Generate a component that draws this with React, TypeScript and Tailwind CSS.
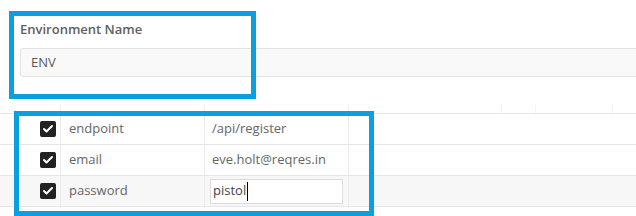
import { Check } from 'lucide-react';

const rows = [
  { key: 'endpoint', value: '/api/register', active: false },
  { key: 'email', value: 'eve.holt@reqres.in', active: false },
  { key: 'password', value: 'pistol', active: true },
];

const Checkbox = () => (
  <span className="flex h-4 w-4 items-center justify-center rounded-[2px] bg-[#222]">
    <Check className="h-3 w-3 text-white" strokeWidth={4} />
  </span>
);

export default function App() {
  return (
    <div className="relative h-[216px] w-[636px] overflow-hidden bg-white font-['Open_Sans',sans-serif] text-[13px]">
      <div className="px-5 pt-[19px]">
        <div className="font-semibold leading-[20px] text-[#606060]">Environment Name</div>
        <div className="-mr-8 mt-[9px] flex h-[29px] items-center rounded-[3px] border border-[#e3e3e3] bg-[#f9f9f9] px-[10px] text-[#5a5a5a]">
          ENV
        </div>
      </div>

      {/* faint header cells above the table */}
      <div className="mt-[28px] flex h-[8px]">
        <div className="w-[61px] border-r border-[#f0f0f0]" />
        <div className="w-[144px] border-r border-[#f0f0f0]" />
        <div className="w-[144px] border-r border-[#f0f0f0]" />
        <div className="w-[153px] border-r border-[#f4f4f4]" />
        <div className="w-[34px] border-r border-[#f4f4f4]" />
        <div className="w-[77px] border-r border-[#f4f4f4]" />
      </div>

      <div className="border-t border-[#e6e6e6]">
        {rows.map((row) => (
          <div
            key={row.key}
            className={`flex h-[31px] border-b border-[#e6e6e6] ${row.active ? 'bg-[#f7f7f7]' : ''}`}
          >
            <div className="flex w-[61px] items-center justify-end border-r border-[#ececec] pr-[4px]">
              <Checkbox />
            </div>
            <div className="flex w-[144px] items-center border-r border-[#ececec] pl-[8px] text-[#666]">
              {row.key}
            </div>
            <div className="flex w-[144px] items-center border-r border-[#ececec] px-[5px] text-[#666]">
              {row.active ? (
                <div className="flex h-[25px] w-full items-center border border-[#dcdcdc] bg-white pl-[2px] text-[#444]">
                  {row.value}
                  <span className="ml-[1px] h-[19px] w-px bg-black" />
                </div>
              ) : (
                <span className="pl-[2px]">{row.value}</span>
              )}
            </div>
            <div className="flex-1" />
          </div>
        ))}
      </div>

      {/* annotation frames */}
      <div className="absolute left-[9px] top-[11px] h-[88px] w-[247px] border-[5px] border-[#0a9fdf]" />
      <div className="absolute left-[14px] top-[111px] h-[105px] w-[360px] border-[5px] border-[#0a9fdf]" />
    </div>
  );
}
